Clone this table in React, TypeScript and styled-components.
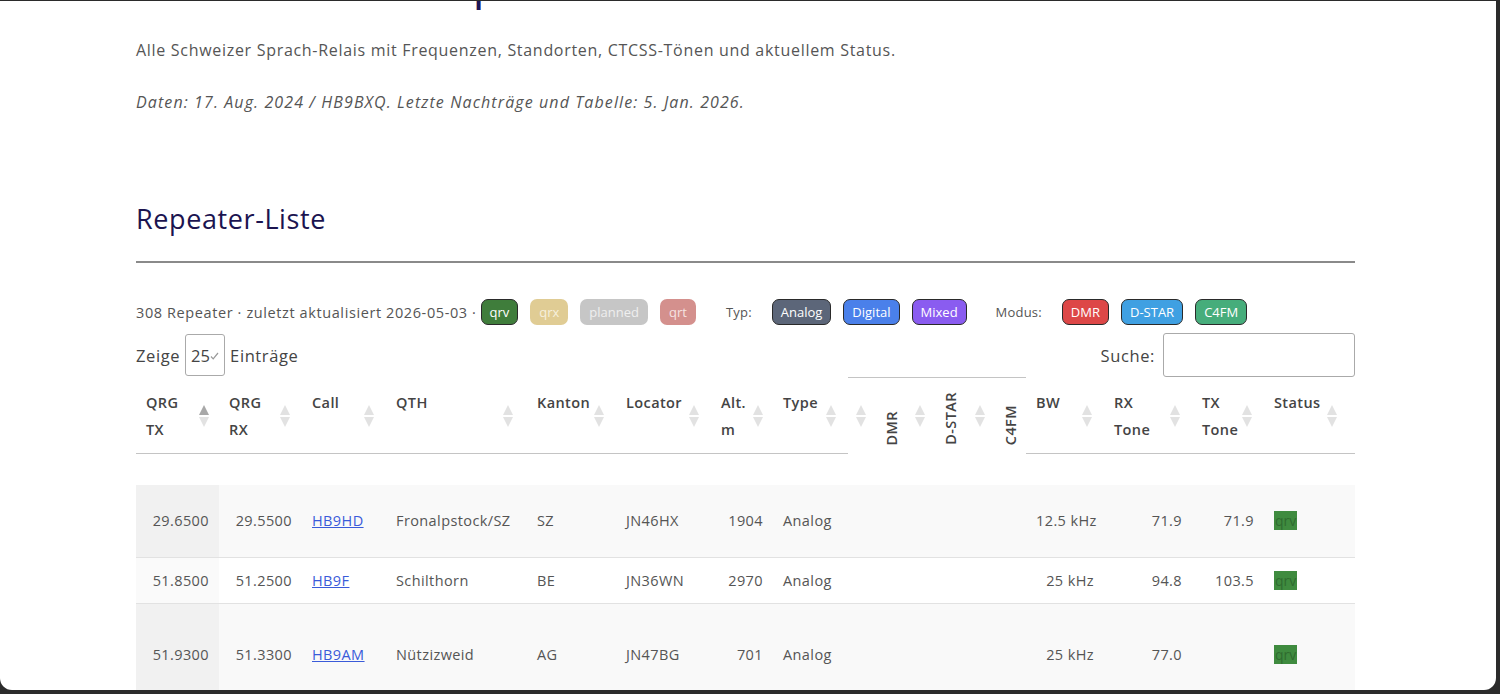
import React from "react";
import styled, { createGlobalStyle, css } from "styled-components";

const Global = createGlobalStyle`
  html, body { margin: 0; padding: 0; }
  body {
    background: #2b2b2b;
    font-family: "Open Sans", "Noto Sans", sans-serif;
    letter-spacing: 0.6px;
    overflow: hidden;
  }
`;

const Frame = styled.div`
  margin-top: 1px;
  width: 1496px;
  height: 689px;
  background: #fff;
  border-radius: 0 0 12px 12px;
  overflow: hidden;
`;

const Content = styled.div`
  width: 1219px;
  margin-left: 136px;
`;

const PageTitle = styled.h1`
  margin: -45px 0 0 134px;
  font-size: 48px;
  line-height: 50px;
  font-weight: 400;
  letter-spacing: 0;
  color: #1c1556;
`;

const Lead = styled.p`
  margin: 32px 0 0;
  font-size: 16px;
  line-height: 24px;
  letter-spacing: 0.7px;
  color: #555;
`;

const Note = styled.p`
  margin: 28px 0 0;
  font-size: 16px;
  line-height: 24px;
  letter-spacing: 1.1px;
  color: #555;
  font-style: italic;
`;

const SectionTitle = styled.h2`
  margin: 89px 0 0;
  font-size: 27px;
  line-height: 32px;
  font-weight: 400;
  letter-spacing: 0.6px;
  color: #1b1450;
`;

const Rule = styled.hr`
  margin: 26px 0 0;
  border: none;
  height: 2px;
  background: #8a8a8a;
`;

const FilterBar = styled.div`
  margin-top: 36px;
  display: flex;
  align-items: center;
  height: 26px;
  font-size: 14.5px;
  color: #555;
`;

const Count = styled.span`
  margin-right: 4px;
`;

const Label = styled.span<{ $ml: number }>`
  font-size: 13px;
  letter-spacing: 0.2px;
  color: #555;
  margin-left: ${(p) => p.$ml}px;
  margin-right: 20px;
`;

const Chip = styled.span<{ $bg: string; $fg?: string; $bordered?: boolean; $gap?: number }>`
  display: inline-flex;
  align-items: center;
  height: 26px;
  box-sizing: border-box;
  padding: 0 8px;
  border-radius: 7px;
  font-size: 13px;
  letter-spacing: 0;
  background: ${(p) => p.$bg};
  color: ${(p) => p.$fg || "#fff"};
  margin-right: ${(p) => (p.$gap ?? 12)}px;
  ${(p) =>
    p.$bordered
      ? css`border: 1px solid #2a2a2a;`
      : css`border: 1px solid transparent;`}
`;

const Controls = styled.div`
  margin-top: 8px;
  height: 44px;
  display: flex;
  align-items: center;
  justify-content: space-between;
  font-size: 16.5px;
  color: #444;
`;

const Group = styled.div`
  display: flex;
  align-items: center;
  gap: 5px;
`;

const LengthBox = styled.span`
  display: inline-flex;
  align-items: center;
  width: 40px;
  height: 42px;
  box-sizing: border-box;
  padding-left: 5px;
  border: 1px solid #aaa;
  border-radius: 3px;
  font-size: 16.5px;
  letter-spacing: 0;
  color: #444;
  overflow: hidden;
  svg { margin-top: 2px; flex-shrink: 0; }
`;

const SearchBox = styled.input`
  width: 192px;
  height: 44px;
  box-sizing: border-box;
  border: 1px solid #aaa;
  border-radius: 3px;
  margin-left: 3px;
  outline: none;
`;

const Table = styled.table`
  width: 1219px;
  table-layout: fixed;
  border-collapse: collapse;
  font-size: 14.5px;
  letter-spacing: 0.4px;
  color: #555;
`;

const Th = styled.th<{ $group?: boolean }>`
  padding: 11px 0 10px 10px;
  vertical-align: top;
  text-align: left;
  font-weight: 600;
  font-size: 14.5px;
  line-height: 27px;
  color: #444;
  border-bottom: 1px solid #c4c4c4;
  ${(p) =>
    p.$group &&
    css`
      border-bottom: none;
      border-top: 1px solid #c4c4c4;
      padding-left: 8px;
    `}
`;

const HeadInner = styled.div<{ $pr: number }>`
  display: flex;
  align-items: center;
  justify-content: space-between;
  min-height: 54px;
  padding-right: ${(p) => p.$pr}px;
`;

const HeadLabel = styled.span`
  align-self: flex-start;
`;

const GroupInner = styled.div`
  display: flex;
  align-items: center;
  gap: 17px;
  min-height: 54px;
`;

const Vertical = styled.span`
  align-self: flex-end;
  writing-mode: vertical-rl;
  transform: rotate(180deg);
  line-height: 18px;
  margin-bottom: -2px;
`;

const Arrows = styled.span<{ $active?: boolean }>`
  display: inline-flex;
  flex-direction: column;
  gap: 2px;
  svg:first-child path { fill: ${(p) => (p.$active ? "#a8a8a8" : "#e2e2e2")}; }
  svg:last-child path { fill: #e2e2e2; }
`;

const SpacerRow = styled.tr`
  height: 32px;
`;

const Row = styled.tr<{ $h: number; $odd: boolean }>`
  height: ${(p) => p.$h}px;
  background: ${(p) => (p.$odd ? "#f9f9f9" : "#fff")};
  border-top: 1px solid #e2e2e2;
  &:first-of-type { border-top: none; }
`;

const Td = styled.td<{ $right?: boolean; $sorted?: boolean; $odd?: boolean }>`
  padding: 0 10px;
  vertical-align: middle;
  white-space: nowrap;
  overflow: hidden;
  text-align: ${(p) => (p.$right ? "right" : "left")};
  ${(p) =>
    p.$sorted &&
    css`
      background: ${p.$odd ? "#f1f1f1" : "#fafafa"};
    `}
`;

const CallLink = styled.a`
  color: #3a5bd9;
  text-decoration: underline;
`;

const Status = styled.span`
  display: inline-block;
  background: #3f8b3f;
  color: #2f6c2f;
  font-size: 14px;
  line-height: 19px;
  padding: 0 1px;
  letter-spacing: 0;
`;

const SortArrows = ({ active }: { active?: boolean }) => (
  <Arrows $active={active}>
    <svg width="10" height="10" viewBox="0 0 10 10">
      <path d="M5 0 L10 10 L0 10 Z" />
    </svg>
    <svg width="10" height="10" viewBox="0 0 10 10">
      <path d="M0 0 L10 0 L5 10 Z" />
    </svg>
  </Arrows>
);

type Col = { label: React.ReactNode; width: number; pr: number; group?: boolean; active?: boolean };

const cols: Col[] = [
  { label: <>QRG<br />TX</>, width: 83, pr: 10, active: true },
  { label: <>QRG<br />RX</>, width: 83, pr: 12 },
  { label: "Call", width: 84, pr: 12 },
  { label: "QTH", width: 141, pr: 14 },
  { label: "Kanton", width: 89, pr: 12 },
  { label: "Locator", width: 95, pr: 12 },
  { label: <>Alt.<br />m</>, width: 62, pr: 10 },
  { label: "Type", width: 75, pr: 12 },
  { label: "DMR", width: 59, pr: 0, group: true },
  { label: "D-STAR", width: 60, pr: 0, group: true },
  { label: "C4FM", width: 59, pr: 0, group: true },
  { label: "BW", width: 78, pr: 12 },
  { label: <>RX<br />Tone</>, width: 88, pr: 12 },
  { label: <>TX<br />Tone</>, width: 72, pr: 12 },
  { label: "Status", width: 91, pr: 18 },
];

type Rep = {
  tx: string; rx: string; call: string; qth: string; kt: string; loc: string;
  alt: string; type: string; bw: string; rxt: string; txt: string; h: number;
};

const rows: Rep[] = [
  { tx: "29.6500", rx: "29.5500", call: "HB9HD", qth: "Fronalpstock/SZ", kt: "SZ", loc: "JN46HX", alt: "1904", type: "Analog", bw: "12.5 kHz", rxt: "71.9", txt: "71.9", h: 72 },
  { tx: "51.8500", rx: "51.2500", call: "HB9F", qth: "Schilthorn", kt: "BE", loc: "JN36WN", alt: "2970", type: "Analog", bw: "25 kHz", rxt: "94.8", txt: "103.5", h: 46 },
  { tx: "51.9300", rx: "51.3300", call: "HB9AM", qth: "Nützizweid", kt: "AG", loc: "JN47BG", alt: "701", type: "Analog", bw: "25 kHz", rxt: "77.0", txt: "", h: 102 },
];

const Check = () => (
  <svg width="9" height="8" viewBox="0 0 9 8">
    <path d="M1 4.5 L3.2 6.8 L8 1" stroke="#999" strokeWidth="1.2" fill="none" />
  </svg>
);

export default function App() {
  return (
    <>
      <Global />
      <Frame>
        <Content>
          <PageTitle>Relais-Repeater CH</PageTitle>
          <Lead>Alle Schweizer Sprach-Relais mit Frequenzen, Standorten, CTCSS-Tönen und aktuellem Status.</Lead>
          <Note>Daten: 17. Aug. 2024 / HB9BXQ. Letzte Nachträge und Tabelle: 5. Jan. 2026.</Note>
          <SectionTitle>Repeater-Liste</SectionTitle>
          <Rule />
          <FilterBar>
            <Count>308 Repeater · zuletzt aktualisiert 2026-05-03 ·</Count>
            <Chip $bg="#3f7d3b" $bordered>qrv</Chip>
            <Chip $bg="#e0cc94" $fg="#f7f0dc">qrx</Chip>
            <Chip $bg="#c6c6c6" $fg="#efefef">planned</Chip>
            <Chip $bg="#d4908d" $fg="#f6e3e2" $gap={0}>qrt</Chip>
            <Label $ml={30}>Typ:</Label>
            <Chip $bg="#5c6679" $bordered>Analog</Chip>
            <Chip $bg="#4a80ea" $bordered>Digital</Chip>
            <Chip $bg="#8a5cf0" $bordered $gap={0}>Mixed</Chip>
            <Label $ml={29}>Modus:</Label>
            <Chip $bg="#dd4747" $bordered>DMR</Chip>
            <Chip $bg="#3fa0e2" $bordered>D-STAR</Chip>
            <Chip $bg="#46ad7b" $bordered>C4FM</Chip>
          </FilterBar>
          <Controls>
            <Group>
              <span>Zeige</span>
              <LengthBox>25<Check /></LengthBox>
              <span>Einträge</span>
            </Group>
            <Group>
              <span>Suche:</span>
              <SearchBox aria-label="Suche" />
            </Group>
          </Controls>
          <Table>
            <colgroup>
              {cols.map((c, i) => (
                <col key={i} style={{ width: c.width }} />
              ))}
            </colgroup>
            <thead>
              <tr>
                {cols.map((c, i) =>
                  c.group ? (
                    <Th key={i} $group>
                      <GroupInner>
                        <SortArrows />
                        <Vertical>{c.label}</Vertical>
                      </GroupInner>
                    </Th>
                  ) : (
                    <Th key={i}>
                      <HeadInner $pr={c.pr}>
                        <HeadLabel>{c.label}</HeadLabel>
                        <SortArrows active={c.active} />
                      </HeadInner>
                    </Th>
                  )
                )}
              </tr>
              <SpacerRow />
            </thead>
            <tbody>
              {rows.map((r, i) => {
                const odd = i % 2 === 0;
                return (
                  <Row key={r.call} $h={r.h} $odd={odd}>
                    <Td $right $sorted $odd={odd}>{r.tx}</Td>
                    <Td $right>{r.rx}</Td>
                    <Td><CallLink href="#">{r.call}</CallLink></Td>
                    <Td>{r.qth}</Td>
                    <Td>{r.kt}</Td>
                    <Td>{r.loc}</Td>
                    <Td $right>{r.alt}</Td>
                    <Td>{r.type}</Td>
                    <Td />
                    <Td />
                    <Td />
                    <Td $right>{r.bw}</Td>
                    <Td $right>{r.rxt}</Td>
                    <Td $right>{r.txt}</Td>
                    <Td><Status>qrv</Status></Td>
                  </Row>
                );
              })}
            </tbody>
          </Table>
        </Content>
      </Frame>
    </>
  );
}
